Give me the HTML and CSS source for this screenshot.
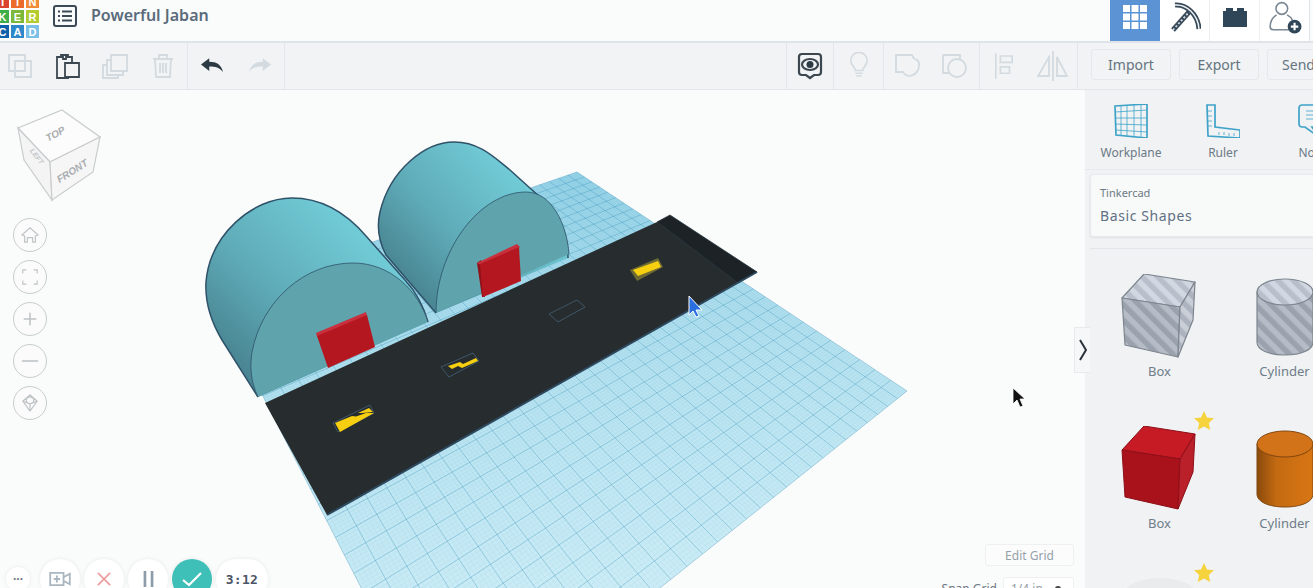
FILE: index.html
```html
<!DOCTYPE html>
<html lang="en">
<head>
<meta charset="utf-8">
<title>Powerful Jaban</title>
<link rel="stylesheet" href="styles.css">
</head>
<body>
<div class="app">
  <header class="topbar">
    <div class="logo">
      <span class="l1">T</span><span class="l2">I</span><span class="l3">N</span>
      <span class="l4">K</span><span class="l5">E</span><span class="l6">R</span>
      <span class="l7">C</span><span class="l8">A</span><span class="l9">D</span>
    </div>
    <svg class="list-icon" viewBox="0 0 24 22"><rect x="1" y="1" width="22" height="20" rx="2" class="i-dark"/><path d="M5 6.500h2M9 6.500h10M5 11h2M9 11h10M5 15.500h2M9 15.500h10" class="i-dark i-thick"/></svg>
    <div class="title">Powerful Jaban</div>
    <nav class="tabs">
      <div class="tab tab-active"><svg viewBox="0 0 24 24" class="tab-svg"><path class="i-white-fill" d="M0 0h7v7H0zM8.500 0h7v7h-7zM17 0h7v7h-7zM0 8.500h7v7H0zM8.500 8.500h7v7h-7zM17 8.500h7v7h-7zM0 17h7v7H0zM8.500 17h7v7h-7zM17 17h7v7h-7z"/></svg></div>
      <div class="tab"><svg viewBox="0 0 32 32" class="tab-svg tab-pick"><path class="pick-out" d="M6 4C17 3 29 13 30 28"/><path class="pick-in" d="M6 4C17 3 29 13 30 28"/><path class="pick-out" d="M4 29 20 11"/><path class="pick-dots" d="M4 29 20 11"/></svg></div>
      <div class="tab"><svg viewBox="0 0 28 22" class="tab-svg tab-brick"><path class="i-navy-fill" d="M2 5h3V2h7v3h4V2h7v3h3v16H2z"/></svg></div>
      <div class="tab tab-last"><svg viewBox="0 0 32 32" class="tab-svg tab-user"><circle cx="13" cy="8" r="5.500" class="i-user"/><path class="i-user" d="M8 14c-3 2-6 6-6 11 0 2 1 3 3 3h15"/><path class="i-user" d="M18 14c2 1 4 3 5 5"/><circle cx="25" cy="25" r="6.500" class="i-navy-fill"/><path d="M25 21.500v7M21.500 25h7" class="i-white-line"/></svg></div>
    </nav>
  </header>

  <div class="toolbar">
    <div class="tool-group group-edit">
      <div class="tool"><svg viewBox="0 0 26 26" class="tool-svg"><path class="i-off" d="M2 2h16v16H2z"/><path class="i-off" d="M8 8h16v16H8z"/></svg></div>
      <div class="tool"><svg viewBox="0 0 26 26" class="tool-svg"><path class="i-on" d="M6 4H2v21h12M6 2h7v2h-2v2H8V4H6zM13 4h4v6"/><path class="i-on" d="M10 10h14v14H10z"/></svg></div>
      <div class="tool"><svg viewBox="0 0 26 26" class="tool-svg"><path class="i-off" d="M9 2h16v16H9z"/><path class="i-off" d="M9 7H5v15h16v-4"/><path class="i-off" d="M5 12H1v13h15v-3"/></svg></div>
      <div class="tool"><svg viewBox="0 0 26 26" class="tool-svg"><path class="i-off" d="M3 6h20M9 6V2h8v4M5 6l1 18h14l1-18M10 10v10M13 10v10M16 10v10"/></svg></div>
    </div>
    <div class="tool-group group-history">
      <div class="tool"><svg viewBox="0 0 24 16" class="tool-svg arrow"><path class="i-dark-fill" d="M0 7 9 0v4c8 0 13 3 15 11-4-5-8-6-15-6v5z"/></svg></div>
      <div class="tool"><svg viewBox="0 0 24 16" class="tool-svg arrow"><path class="i-off-fill" d="M24 7 15 0v4C7 4 2 7 0 15c4-5 8-6 15-6v5z"/></svg></div>
    </div>
    <div class="tool-spacer"></div>
    <div class="tool-group group-note">
      <div class="tool"><svg viewBox="0 0 26 28" class="tool-svg note"><path class="i-on i-bold" d="M5 2h16a3 3 0 0 1 3 3v15a3 3 0 0 1-3 3h-4l-4 3-4-3H5a3 3 0 0 1-3-3V5a3 3 0 0 1 3-3z"/><ellipse cx="13" cy="12.500" rx="8" ry="5.500" class="i-on i-bold"/><circle cx="13" cy="12.500" r="3.500" class="i-dark-fill"/></svg></div>
    </div>
    <div class="tool-group group-bulb">
      <div class="tool"><svg viewBox="0 0 22 30" class="tool-svg bulb"><path class="i-off" d="M7 20c0-4-5-5-5-11a9 9 0 0 1 18 0c0 6-5 7-5 11zM7 23h8M8 26h6"/></svg></div>
    </div>
    <div class="tool-group group-shape">
      <div class="tool"><svg viewBox="0 0 26 26" class="tool-svg"><path class="i-off" d="M1 2h16c1 3 2 4 5 5 3 2 3 9-1 13-4 4-10 4-13-1H1z"/></svg></div>
      <div class="tool"><svg viewBox="0 0 26 26" class="tool-svg"><path class="i-off" d="M1 2h17v5M1 2v18h7"/><circle cx="15" cy="15" r="9" class="i-off"/></svg></div>
    </div>
    <div class="tool-group group-align">
      <div class="tool"><svg viewBox="0 0 22 30" class="tool-svg bulb"><path class="i-off" d="M2 1v28M7 4h13v7H7zM7 16h10v7H7z"/></svg></div>
      <div class="tool"><svg viewBox="0 0 32 30" class="tool-svg mirror"><path class="i-off" d="M16 0v30M12 6v19H1zM20 6v19h10z"/></svg></div>
    </div>
    <div class="tool-actions">
      <button class="action">Import</button>
      <button class="action">Export</button>
      <button class="action action-clip">Send To</button>
    </div>
  </div>

  <div class="workspace">
    <main class="canvas">
      <svg class="scene" id="scene" viewBox="0 90 1085 498" preserveAspectRatio="none">
        <defs>
          <linearGradient id="planeFill" gradientUnits="userSpaceOnUse" x1="560" y1="170" x2="620" y2="588">
            <stop offset="0" stop-color="#97d4e9"/><stop offset="0.5" stop-color="#b6e2f0"/><stop offset="1" stop-color="#cbecf6"/>
          </linearGradient>
          <linearGradient id="bodyA" gradientUnits="userSpaceOnUse" x1="225" y1="370" x2="365" y2="225">
            <stop offset="0" stop-color="#467f8c"/><stop offset="0.45" stop-color="#5fabb8"/><stop offset="1" stop-color="#72ced9"/>
          </linearGradient>
          <linearGradient id="bodyB" gradientUnits="userSpaceOnUse" x1="395" y1="285" x2="520" y2="170">
            <stop offset="0" stop-color="#467f8c"/><stop offset="0.45" stop-color="#5fabb8"/><stop offset="1" stop-color="#72ced9"/>
          </linearGradient>
        </defs>
        <polygon class="plane" points="577,172 907,391 448,757 212,297"/>
        <g id="gridLines"></g>

        <path class="cyl-body" fill="url(#bodyB)" d="M436 313 L386 255 C378 240 377 225 380 212 C390 170 425 142 454 142 C480 142 495 158 510 170 L552 208 C562 222 568 238 568 258"/>
        <path class="cyl-front" d="M436 313 C436 250 480 192 526 192 C552 192 567 225 569 254"/>
        <path class="cyl-body" fill="url(#bodyA)" d="M258 397 L222 340 C210 320 205 300 206 282 C210 235 252 198 292 198 C325 198 348 215 366 236 L405 280 C416 292 424 308 428 322"/>
        <path class="cyl-front" d="M258 397 C250 380 250 365 252 352 C262 300 305 263 353 263 C390 263 418 290 428 322"/>

        <polygon class="red-top" points="316,333 366,312 367,316 317,337"/>
        <polygon class="red-face" points="317,336 367,315 375,347 328,368"/>
        <polygon class="red-side" points="477,263 481,260 485,297 482,297"/>
        <polygon class="red-top" points="477,263 517,244 520,247 481,265"/>
        <polygon class="red-face" points="480,264 519,247 521,281 483,297"/>

        <polygon class="road" points="265,403 670,216 757,272 327,515"/>
        <polygon class="road-end" points="657,222 670,215 757,272 738,283"/>
        <polyline class="road-edge" points="327,515 757,272"/>

        <polygon class="wire" points="333,423 370,405 374,413 338,432"/>
        <polygon class="yellow" points="335,423 352,416 356,416.500 366,413 374,413 340,432"/>
        <polygon class="yellow" points="358,413 369,408 373,412 362,413"/>
        <polygon class="wire" points="441,367 473,353 479,361 449,377"/>
        <polygon class="yellow" points="448,366 460,362 463,364 476,358 478,361 462,368 458,366 452,369"/>
        <polygon class="wire" points="549,314 577,300 585,307 558,322"/>
        <polygon class="yellow-base" points="630,270 658,258 663,267 637,281"/>
        <polygon class="yellow" points="633,270 658,261 661,267 638,276"/>

        <path class="cursor-blue" d="M689 296v19l4-4 3 6 3-1-3-6h6z"/>
        <path class="cursor-black" d="M1013 388v16l4-4 3 7 3-1-3-7h5z"/>
      </svg>

      <div class="view-tools">
        <svg class="cube" viewBox="0 0 86 94">
          <polygon class="cube-top" points="45,2 83,29 33,54 1,20"/>
          <polygon class="cube-left" points="1,20 33,54 35,92 7,52"/>
          <polygon class="cube-front" points="33,54 83,29 76,64 35,92"/>
          <text class="cube-text" transform="translate(40 29) rotate(-28)" text-anchor="middle">TOP</text>
          <text class="cube-text cube-small" transform="translate(18 50) rotate(52)" text-anchor="middle">LEFT</text>
          <text class="cube-text" transform="translate(57 66) rotate(-32)" text-anchor="middle">FRONT</text>
        </svg>
        <div class="view-btns">
          <div class="round"><svg viewBox="0 0 20 20" class="round-svg"><path class="i-grey" d="M1 10 10 2l9 8-3 1v7h-3v-5H7v5H4v-7z"/></svg></div>
          <div class="round"><svg viewBox="0 0 20 20" class="round-svg"><path class="i-grey" d="M2 6V2h4M14 2h4v4M18 14v4h-4M6 18H2v-4"/></svg></div>
          <div class="round"><svg viewBox="0 0 20 20" class="round-svg"><path class="i-grey i-w2" d="M10 3v14M3 10h14"/></svg></div>
          <div class="round"><svg viewBox="0 0 20 20" class="round-svg"><path class="i-grey i-w2" d="M1 10h18"/></svg></div>
          <div class="round"><svg viewBox="0 0 20 20" class="round-svg"><path class="i-grey" d="M10 1 2 8l8 11 8-11zM2 8l8 3 8-3M10 11v8M6 5l4-2 4 2v4l-4 2-4-2z"/></svg></div>
        </div>
      </div>

      <div class="rec-bar">
        <div class="rec rec-small">···</div>
        <div class="rec"><svg viewBox="0 0 24 18" class="rec-svg"><path class="i-rec" d="M1 2h15v14H1zM16 7l7-4v12l-7-4M8.500 5v8M5 9h7"/></svg></div>
        <div class="rec"><svg viewBox="0 0 16 16" class="rec-x"><path d="M1 1l14 14M15 1 1 15"/></svg></div>
        <div class="rec"><svg viewBox="0 0 12 18" class="rec-pause"><path d="M2 0v18M10 0v18"/></svg></div>
        <div class="rec rec-ok"><svg viewBox="0 0 20 16" class="rec-check"><path d="M1 9l6 5L19 2"/></svg></div>
        <div class="rec rec-time">3:12</div>
      </div>

      <div class="grid-tools">
        <button class="edit-grid">Edit Grid</button>
        <div class="snap"><span class="snap-label">Snap Grid</span><span class="snap-select">1/4 in<i class="snap-arrow"></i></span></div>
      </div>

      <div class="panel-toggle"><svg viewBox="0 0 8 22" class="toggle-svg"><path d="M1 1l6 10-6 10"/></svg></div>
    </main>

    <aside class="sidebar">
      <div class="side-tools">
        <div class="side-tool"><svg viewBox="0 0 34 34" class="side-svg"><path class="i-blue" d="M1 2 33 0v34L2 31z"/><path class="i-blue-thin" d="M7 2v30M13 1.500v31M20 1v32M27 .5v33M1 8l32-2M1 14h32M1 20l32 1M2 26l31 2"/></svg><span>Workplane</span></div>
        <div class="side-tool"><svg viewBox="0 0 34 34" class="side-svg"><path class="i-blue" d="M1 1h8v22l25 3v8L2 32z"/><path class="i-blue-thin" d="M2 7h4M2 12h4M2 17h4M2 22h4M13 28v3M18 28v3M23 29v3M28 29v3"/></svg><span>Ruler</span></div>
        <div class="side-tool"><svg viewBox="0 0 34 34" class="side-svg"><path class="i-blue" d="M4 1h28v22H14l7 10L7 23H4a3 3 0 0 1-3-3V4a3 3 0 0 1 3-3z"/><path class="i-blue-thin" d="M8 7h20M8 11h20M8 15h20"/></svg><span>Notes</span></div>
      </div>
      <div class="lib-card">
        <div class="lib-source">Tinkercad</div>
        <div class="lib-name">Basic Shapes</div>
      </div>
      <div class="shape-grid">
        <svg class="svg-defs" width="0" height="0">
          <defs>
            <pattern id="hatchTop" width="11" height="11" patternUnits="userSpaceOnUse" patternTransform="rotate(-45)"><rect width="11" height="11" fill="#d2d8e2"/><rect width="5.500" height="11" fill="#b8bfcb"/></pattern>
            <pattern id="hatchFront" width="11" height="11" patternUnits="userSpaceOnUse" patternTransform="rotate(-45)"><rect width="11" height="11" fill="#b6bcc6"/><rect width="5.500" height="11" fill="#9aa2ae"/></pattern>
            <pattern id="hatchSide" width="11" height="11" patternUnits="userSpaceOnUse" patternTransform="rotate(-45)"><rect width="11" height="11" fill="#c9ced7"/><rect width="5.500" height="11" fill="#aeb4bf"/></pattern>
            <linearGradient id="orangeSide" x1="0" x2="1" y1="0" y2="0"><stop offset="0" stop-color="#8a4a0c"/><stop offset=".35" stop-color="#c46a12"/><stop offset="1" stop-color="#d87614"/></linearGradient>
          </defs>
        </svg>
        <div class="shape">
          <svg viewBox="0 0 76 84" class="shape-box">
            <polygon class="edge-grey" fill="url(#hatchTop)" points="24,0 75,8 60,33 2,24"/>
            <polygon class="edge-grey" fill="url(#hatchFront)" points="2,24 60,33 58,83 5,71"/>
            <polygon class="edge-grey" fill="url(#hatchSide)" points="75,8 60,33 58,83 73,46"/>
          </svg>
          <span class="shape-name">Box</span>
        </div>
        <div class="shape">
          <svg viewBox="0 0 60 80" class="shape-cyl">
            <path class="edge-grey" fill="url(#hatchFront)" d="M2 15v50c0 8 12 13 28 13s28-5 28-13V15z"/>
            <ellipse class="edge-grey" fill="url(#hatchTop)" cx="30" cy="15" rx="28" ry="13"/>
          </svg>
          <span class="shape-name">Cylinder</span>
        </div>
        <div class="shape">
          <svg viewBox="0 0 76 84" class="shape-box">
            <polygon class="edge-red red-t" points="24,0 75,8 60,33 2,24"/>
            <polygon class="edge-red red-f" points="2,24 60,33 58,83 5,71"/>
            <polygon class="edge-red red-s" points="75,8 60,33 58,83 73,46"/>
          </svg>
          <span class="shape-name">Box</span>
          <svg viewBox="0 0 20 20" class="star"><path d="M10 0l3 6.500 7 .8-5.200 4.700 1.400 7L10 15.500 3.800 19l1.400-7L0 7.300l7-.8z"/></svg>
        </div>
        <div class="shape">
          <svg viewBox="0 0 60 80" class="shape-cyl">
            <path class="edge-orange" fill="url(#orangeSide)" d="M2 15v50c0 8 12 13 28 13s28-5 28-13V15z"/>
            <ellipse class="edge-orange orange-t" cx="30" cy="15" rx="28" ry="13"/>
          </svg>
          <span class="shape-name">Cylinder</span>
        </div>
        <div class="shape">
          <div class="shape-peek"></div>
          <svg viewBox="0 0 20 20" class="star"><path d="M10 0l3 6.500 7 .8-5.200 4.700 1.400 7L10 15.500 3.800 19l1.400-7L0 7.300l7-.8z"/></svg>
        </div>
      </div>
    </aside>
  </div>
</div>
<script src="grid.js"></script>
</body>
</html>
```

FILE: styles.css
```css
* { box-sizing: border-box; }
html, body { margin: 0; height: 100%; overflow: hidden; }
body { font-family: "Noto Sans", "Open Sans", sans-serif; background: #fafbfb; color: #5f6e7c; }
svg { display: block; }
button { font: inherit; }

.app { width: 1313px; height: 588px; display: flex; flex-direction: column; overflow: hidden; }

/* top bar */
.topbar { flex: 0 0 43px; display: flex; align-items: flex-start; background: #fafbfb; border-bottom: 2px solid #dfe4e8; overflow: hidden; }
.logo { flex: 0 0 45px; height: 45px; margin: -6px 0 0 -5px; display: grid; grid-template-columns: repeat(3, 15px); grid-template-rows: repeat(3, 15px); }
.logo span { display: flex; align-items: center; justify-content: center; color: #fff; font: 700 11px "Liberation Sans", sans-serif; border: .5px solid #fff; }
.l1 { background: #d9432f; } .l2 { background: #ec6a2c; } .l3 { background: #f28c38; }
.l4 { background: #3fae49; } .l5 { background: #7cb83a; } .l6 { background: #b5cc30; }
.l7 { background: #0d62ab; } .l8 { background: #2f88c9; } .l9 { background: #7cc0e8; }
.list-icon { width: 24px; height: 22px; margin: 5px 0 0 13px; fill: none; }
.title { margin: 4px 0 0 14px; font-size: 16px; line-height: 22px; font-weight: 600; color: #5a6b7b; }
.tabs { margin-left: auto; display: flex; align-self: stretch; margin-right: 3px; }
.tab { width: 50px; padding-bottom: 7px; display: flex; align-items: center; justify-content: center; background: #fff; border-right: 1px solid #eceff1; }
.tab-active { background: #5b93d5; border: 0; }
.tab-last { border-right: 1px solid #dfe4e8; }
.tab-svg { width: 24px; height: 24px; }
.tab-pick { width: 32px; height: 32px; }
.tab-brick { width: 28px; height: 22px; }
.tab-user { width: 34px; height: 34px; }
.pick-out { fill: none; stroke: #38495a; stroke-width: 5; }
.pick-in { fill: none; stroke: #eef1f3; stroke-width: 1.500; }
.pick-dots { fill: none; stroke: #d5dbe0; stroke-width: 1.800; stroke-dasharray: 2 2; }

/* icon paints */
.i-dark { fill: none; stroke: #3c4a57; stroke-width: 2; }
.i-thick { stroke-width: 2; }
.i-dark-fill { fill: #2c3a44; }
.i-white-fill { fill: #fff; }
.i-white-line { fill: none; stroke: #fff; stroke-width: 2; }
.i-navy-fill { fill: #2f4558; }
.i-user { fill: none; stroke: #7a8794; stroke-width: 1.500; }
.i-off { fill: none; stroke: #d3dbe0; stroke-width: 1.800; }
.i-off-fill { fill: #d3dbe0; }
.i-on { fill: none; stroke: #3c4750; stroke-width: 1.800; }
.i-bold { stroke-width: 2.200; }
.i-grey { fill: none; stroke: #bfc4c7; stroke-width: 1.300; }
.i-w2 { stroke-width: 1.800; }
.i-rec { fill: none; stroke: #a9b6c0; stroke-width: 2; }
.i-blue { fill: none; stroke: #3fa3c9; stroke-width: 1.700; }
.i-blue-thin { fill: none; stroke: #3fa3c9; stroke-width: .8; }

/* toolbar */
.toolbar { flex: 0 0 47px; display: flex; align-items: stretch; background: #f1f3f4; border-bottom: 1px solid #e2e6e9; }
.tool-group { display: flex; border-right: 1px solid #e3e7ea; }
.group-edit { width: 192px; margin-left: -4px; }
.group-history { width: 97px; }
.group-note { width: 48px; border-left: 1px solid #e3e7ea; }
.group-bulb { width: 50px; }
.group-shape { width: 96px; }
.group-align { width: 98px; }
.tool { flex: 1; display: flex; align-items: center; justify-content: center; padding-bottom: 1px; }
.tool-svg { width: 26px; height: 26px; }
.arrow { width: 22px; height: 15px; }
.note { width: 26px; height: 28px; }
.bulb { width: 20px; height: 28px; }
.mirror { width: 32px; height: 30px; }
.tool-spacer { flex: 1; }
.tool-actions { flex: 0 0 235px; display: flex; gap: 8px; padding: 6px 0 9px 13px; overflow: hidden; }
.action { flex: 0 0 80px; border: 1px solid #e6e9eb; border-radius: 3px; background: #f1f3f4; color: #66737f; font-size: 14px; padding: 0; white-space: nowrap; }
.action-clip { flex-basis: 82px; }

/* workspace */
.workspace { flex: 1; display: flex; min-height: 0; }
.canvas { flex: 0 0 1085px; position: relative; background: #fafbfb; }
.scene { width: 1085px; height: 498px; }
.plane { fill: url(#planeFill); }
.cyl-body { stroke: #2f5268; stroke-width: 1.500; stroke-linejoin: round; }
.cyl-front { fill: #5fa3ad; stroke: #2f5268; stroke-width: .8; }
.red-top { fill: #c8303d; }
.red-face { fill: #b51720; }
.red-side { fill: #8f131b; }
.road { fill: #272c2f; }
.road-end { fill: #1c2226; stroke: #2f3d45; stroke-width: .8; }
.road-edge { fill: none; stroke: #2e4a60; stroke-width: 2; }
.yellow { fill: #f5cf10; }
.yellow-base { fill: #6d6a34; }
.wire { fill: none; stroke: #3f5668; stroke-width: 1; }
.cursor-blue { fill: #2a6fe0; stroke: #fff; stroke-width: 1; }
.cursor-black { fill: #111; stroke: #fff; stroke-width: .8; }

.view-tools { position: absolute; left: 17px; top: 18px; display: flex; flex-direction: column; }
.cube { width: 86px; height: 94px; }
.cube-top { fill: #fcfcfc; stroke: #c9cccd; stroke-width: 1.200; }
.cube-left { fill: #f4f4f4; stroke: #c9cccd; stroke-width: 1.200; }
.cube-front { fill: #f6f6f6; stroke: #c9cccd; stroke-width: 1.200; }
.cube-text { font: italic 700 10px "Liberation Sans", sans-serif; fill: #a9adb0; }
.cube-small { font-size: 7px; fill: #c4c7c9; }
.view-btns { display: flex; flex-direction: column; gap: 8px; margin: 16px 0 0 -4px; }
.round { width: 34px; height: 34px; border-radius: 50%; border: 1px solid #c8cccf; background: #fbfbfb; display: flex; align-items: center; justify-content: center; }
.round-svg { width: 18px; height: 18px; }

.rec-bar { position: absolute; left: 6px; bottom: -11px; display: flex; align-items: center; gap: 4px; }
.rec { width: 40px; height: 40px; border-radius: 50%; background: #fff; display: flex; align-items: center; justify-content: center; box-shadow: 0 0 4px rgba(0, 0, 0, .08); }
.rec-small { width: 24px; height: 24px; margin-right: 6px; font-size: 12px; line-height: 24px; font-weight: 700; color: #6d7984; }
.rec-svg { width: 22px; height: 16px; }
.rec-x { width: 14px; height: 14px; fill: none; stroke: #ec9a9a; stroke-width: 1.800; }
.rec-pause { width: 11px; height: 16px; fill: none; stroke: #8c9ca9; stroke-width: 3; }
.rec-ok { background: #3ebfb8; }
.rec-check { width: 20px; height: 16px; fill: none; stroke: #fff; stroke-width: 2.200; }
.rec-time { width: 52px; border-radius: 20px; font-size: 13px; font-weight: 700; letter-spacing: .3px; color: #4c5566; font-family: "DejaVu Sans Mono", monospace; }

.grid-tools { position: absolute; right: 11px; top: 454px; display: flex; flex-direction: column; align-items: flex-end; gap: 11px; }
.edit-grid { width: 89px; height: 22px; padding: 0; border: 1px solid #eef0f1; border-radius: 3px; background: #fcfcfc; color: #95a0a9; font-size: 12px; }
.snap { display: flex; align-items: center; gap: 6px; }
.snap-label { font-size: 12px; color: #6a7682; }
.snap-select { position: relative; width: 71px; height: 22px; padding: 2px 0 0 7px; border: 1px solid #eef0f1; border-radius: 3px; background: #fff; font-size: 12px; color: #95a0a9; }
.snap-arrow { position: absolute; right: 12px; top: 8px; width: 6px; height: 5px; border-radius: 50%; background: #444; }

.panel-toggle { position: absolute; right: -5px; top: 237px; width: 16px; height: 46px; display: flex; align-items: center; justify-content: center; background: #f6f7f8; border: 1px solid #e8ebed; border-right: 0; z-index: 2; }
.toggle-svg { width: 8px; height: 22px; fill: none; stroke: #2a3138; stroke-width: 2; }

/* sidebar */
.sidebar { flex: 0 0 228px; background: #f0f2f3; overflow: hidden; display: flex; flex-direction: column; }
.side-tools { flex: 0 0 80px; display: flex; padding-top: 14px; border-bottom: 1px solid #e6e9eb; }
.side-tool { flex: 0 0 92px; display: flex; flex-direction: column; align-items: center; gap: 6px; font-size: 12px; color: #6c7986; }
.side-svg { width: 34px; height: 34px; }
.lib-card { flex: 0 0 63px; margin: 4px 0 0 5px; padding: 10px 10px 0 9px; background: #f8f9f9; border: 1px solid #e8ebed; border-right: 0; border-radius: 3px 0 0 3px; box-shadow: 0 1px 2px rgba(90, 110, 130, .12); }
.lib-source { font-size: 11px; line-height: 16px; color: #6c7986; }
.lib-name { margin-top: 5px; font-size: 14px; line-height: 20px; color: #5f7083; letter-spacing: .6px; }
.shape-grid { margin: 11px 0 0 5px; padding: 25px 0 0 7px; border-top: 1px solid #e3e6e8; display: grid; grid-template-columns: repeat(2, 125px); grid-auto-rows: 152px; }
.svg-defs { position: absolute; }
.shape { position: relative; display: flex; flex-direction: column; align-items: center; }
.shape-box { width: 76px; height: 84px; margin: 0 4px 3px 0; }
.shape-cyl { width: 60px; height: 80px; margin: 3px 0 4px; }
.shape-name { font-size: 13px; line-height: 20px; color: #6f7c89; }
.edge-grey { stroke: #7d858f; stroke-width: 1.200; stroke-linejoin: round; }
.edge-red { stroke: #8d0f18; stroke-width: 1; stroke-linejoin: round; }
.red-t { fill: #c61a25; } .red-f { fill: #a9121b; } .red-s { fill: #b9202a; }
.edge-orange { stroke: #80460e; stroke-width: 1; }
.orange-t { fill: #d2731a; }
.star { position: absolute; left: 97px; top: -15px; width: 20px; height: 20px; fill: #f6d33c; }
.shape-peek { width: 70px; height: 30px; border-radius: 50%; background: #e9ebec; }
```

FILE: grid.js
```js
// Draws the workplane grid in perspective: maps the unit square onto the plane's four corners.
(function () {
  var A = [577, 172], B = [907, 391], F = [448, 757], L = [212, 297];
  var dx1 = B[0] - F[0], dx2 = L[0] - F[0], sx = A[0] - B[0] + F[0] - L[0];
  var dy1 = B[1] - F[1], dy2 = L[1] - F[1], sy = A[1] - B[1] + F[1] - L[1];
  var det = dx1 * dy2 - dx2 * dy1;
  var g = (sx * dy2 - dx2 * sy) / det;
  var h = (dx1 * sy - sx * dy1) / det;
  var a = B[0] - A[0] + g * B[0], b = L[0] - A[0] + h * L[0], c = A[0];
  var d = B[1] - A[1] + g * B[1], e = L[1] - A[1] + h * L[1], f = A[1];

  function map(u, v) {
    var w = g * u + h * v + 1;
    return ((a * u + b * v + c) / w).toFixed(1) + ' ' + ((d * u + e * v + f) / w).toFixed(1);
  }
  function lines(n, skip) {
    var out = '';
    for (var i = 0; i <= n; i++) {
      if (skip && i % skip === 0) continue;
      var t = i / n;
      out += 'M' + map(t, 0) + 'L' + map(t, 1) + 'M' + map(0, t) + 'L' + map(1, t);
    }
    return out;
  }
  var holder = document.getElementById('gridLines');
  var ns = 'http://www.w3.org/2000/svg';
  function add(dPath, color, width) {
    var p = document.createElementNS(ns, 'path');
    p.setAttribute('d', dPath);
    p.setAttribute('fill', 'none');
    p.setAttribute('stroke', color);
    p.setAttribute('stroke-width', width);
    holder.appendChild(p);
  }
  add(lines(150, 5), 'rgba(60,155,195,.2)', 0.3);
  add(lines(30), 'rgba(40,135,175,.55)', 0.6);
})();
```
